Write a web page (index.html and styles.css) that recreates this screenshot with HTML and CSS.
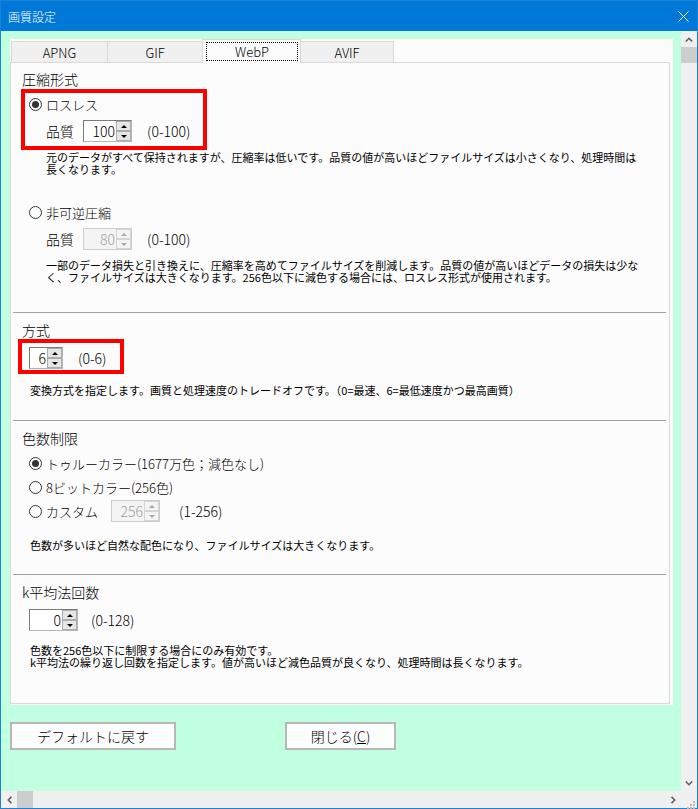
FILE: index.html
```html
<!DOCTYPE html>
<html lang="ja">
<head>
    <meta charset="UTF-8">
    <title>画質設定</title>
    <link rel="stylesheet" href="styles.css">
</head>
<body>
<div class="window">
    <!-- Title bar -->
    <div class="titlebar">
        <span class="title">画質設定</span>
        <svg class="close" width="11" height="11" viewBox="0 0 11 11">
            <path d="M0.5 0.5 L10.5 10.5 M10.5 0.5 L0.5 10.5" stroke="#fff" stroke-width="1" fill="none"/>
        </svg>
    </div>

    <div class="client">
        <div class="main">
            <div class="sheet">
                <!-- Tabs -->
                <div class="tabs">
                    <div class="tab tab-apng">APNG</div>
                    <div class="tab tab-gif">GIF</div>
                    <div class="tab tab-webp active"><span class="focus">WebP</span></div>
                    <div class="tab tab-avif">AVIF</div>
                </div>

                <div class="page">
                    <!-- 圧縮形式 -->
                    <div class="group group-first">
                        <div class="heading">圧縮形式</div>
                        <div class="option opt-top"><span class="radio on"></span>ロスレス</div>
                        <div class="sub sub-indent">
                            <span class="label">品質</span>
                            <div class="spin spin-wide">
                                <span class="spin-val">100</span>
                                <span class="spin-btns"><span class="spin-btn up"></span><span class="spin-btn down"></span></span>
                            </div>
                            <span class="range">(0-100)</span>
                        </div>
                        <p class="desc desc-indent">元のデータがすべて保持されますが、圧縮率は低いです。品質の値が高いほどファイルサイズは小さくなり、処理時間は<br>長くなります。</p>

                        <div class="option opt-lossy"><span class="radio"></span>非可逆圧縮</div>
                        <div class="sub sub-indent">
                            <span class="label">品質</span>
                            <div class="spin spin-wide off">
                                <span class="spin-val">80</span>
                                <span class="spin-btns"><span class="spin-btn up"></span><span class="spin-btn down"></span></span>
                            </div>
                            <span class="range">(0-100)</span>
                        </div>
                        <p class="desc desc-indent">一部のデータ損失と引き換えに、圧縮率を高めてファイルサイズを削減します。品質の値が高いほどデータの損失は少な<br>く、ファイルサイズは大きくなります。256色以下に減色する場合には、ロスレス形式が使用されます。</p>
                    </div>

                    <!-- 方式 -->
                    <div class="group group-method">
                        <div class="heading">方式</div>
                        <div class="sub sub-row">
                            <div class="spin spin-small">
                                <span class="spin-val">6</span>
                                <span class="spin-btns"><span class="spin-btn up"></span><span class="spin-btn down"></span></span>
                            </div>
                            <span class="range">(0-6)</span>
                        </div>
                        <p class="desc desc-method">変換方式を指定します。画質と処理速度のトレードオフです。（0=最速、6=最低速度かつ最高画質）</p>
                    </div>

                    <!-- 色数制限 -->
                    <div class="group group-colors">
                        <div class="heading">色数制限</div>
                        <div class="option opt-top"><span class="radio on"></span>トゥルーカラー(1677万色；減色なし)</div>
                        <div class="option opt-next"><span class="radio"></span>8ビットカラー(256色)</div>
                        <div class="option opt-next">
                            <span class="radio"></span>カスタム
                            <div class="spin spin-wide off spin-custom">
                                <span class="spin-val">256</span>
                                <span class="spin-btns"><span class="spin-btn up"></span><span class="spin-btn down"></span></span>
                            </div>
                            <span class="range">(1-256)</span>
                        </div>
                        <p class="desc desc-colors">色数が多いほど自然な配色になり、ファイルサイズは大きくなります。</p>
                    </div>

                    <!-- k平均法回数 -->
                    <div class="group group-kmeans">
                        <div class="heading">k平均法回数</div>
                        <div class="sub sub-row">
                            <div class="spin spin-wide">
                                <span class="spin-val">0</span>
                                <span class="spin-btns"><span class="spin-btn up"></span><span class="spin-btn down"></span></span>
                            </div>
                            <span class="range range-k">(0-128)</span>
                        </div>
                        <p class="desc desc-kmeans">色数を256色以下に制限する場合にのみ有効です。<br>k平均法の繰り返し回数を指定します。値が高いほど減色品質が良くなり、処理時間は長くなります。</p>
                    </div>

                    <!-- annotation boxes -->
                    <div class="mark mark-quality"></div>
                    <div class="mark mark-method"></div>
                </div>
            </div>

            <div class="buttons">
                <button class="btn btn-default">デフォルトに戻す</button>
                <button class="btn btn-close">閉じる(<u>C</u>)</button>
            </div>
        </div>

        <!-- Vertical scrollbar -->
        <div class="vscroll">
            <div class="arrow">
                <svg width="8" height="5" viewBox="0 0 8 5"><polyline points="0.8,4.5 4,1.3 7.2,4.5" fill="none" stroke="#606060" stroke-width="1.6"/></svg>
            </div>
            <div class="vthumb"></div>
            <div class="track"></div>
            <div class="arrow">
                <svg width="8" height="5" viewBox="0 0 8 5"><polyline points="0.8,0.5 4,3.7 7.2,0.5" fill="none" stroke="#606060" stroke-width="1.6"/></svg>
            </div>
        </div>
    </div>

    <!-- Horizontal scrollbar -->
    <div class="hscroll">
        <div class="harrow">
            <svg width="5" height="8" viewBox="0 0 5 8"><polyline points="4.5,0.8 1.3,4 4.5,7.2" fill="none" stroke="#606060" stroke-width="1.6"/></svg>
        </div>
        <div class="hthumb"></div>
        <div class="track"></div>
        <div class="harrow">
            <svg width="5" height="8" viewBox="0 0 5 8"><polyline points="0.5,0.8 3.7,4 0.5,7.2" fill="none" stroke="#606060" stroke-width="1.6"/></svg>
        </div>
        <div class="corner">
            <svg width="16" height="17" viewBox="0 0 16 17">
                <rect x="12" y="8" width="2" height="2" fill="#bcbcbc"/>
                <rect x="9" y="11" width="2" height="2" fill="#bcbcbc"/>
                <rect x="12" y="11" width="2" height="2" fill="#bcbcbc"/>
                <rect x="6" y="14" width="2" height="2" fill="#bcbcbc"/>
                <rect x="9" y="14" width="2" height="2" fill="#bcbcbc"/>
                <rect x="12" y="14" width="2" height="2" fill="#bcbcbc"/>
            </svg>
        </div>
    </div>
</div>
</body>
</html>
```

FILE: styles.css
```css
/* Reset */
* {
    margin: 0;
    padding: 0;
    box-sizing: border-box;
}

body {
    font-family: "Noto Sans CJK JP", sans-serif;
    font-weight: 300;
    color: #000;
    background-color: #fff;
}

/* Window frame */
.window {
    width: 698px;
    height: 809px;
    border: 1px solid #1883d7;
    background-color: #c0ffe0; /* mint client area */
    display: flex;
    flex-direction: column;
}

.titlebar {
    height: 30px;
    flex-shrink: 0;
    background-color: #0078d7;
    color: #fff;
    font-size: 12px;
    display: flex;
    align-items: center;
    justify-content: space-between;
    padding: 0 8px 0 7px;
}

.client {
    height: 760px;
    display: flex;
}

.main {
    width: 680px;
    padding: 8px 0 0 9px;
}

/* White sheet holding the tab control */
.sheet {
    width: 663px;
    height: 666px;
    background-color: #fcfcfc;
}

.tabs {
    height: 23px;
    display: flex;
    align-items: flex-end;
    padding-left: 1px;
}

.tab {
    height: 21px;
    border: 1px solid #d9d9d9;
    border-bottom: none;
    background-color: #f0f0f0;
    font-size: 13px;
    display: flex;
    align-items: center;
    justify-content: center;
    margin-right: -1px;
}

.tab-apng { width: 97px; }
.tab-gif { width: 96px; }
.tab-avif { width: 94px; }

.tab.active {
    width: 99px;
    height: 24px;
    margin-bottom: -1px;
    background-color: #fcfcfc;
    position: relative;
    z-index: 1;
    padding: 2px 2px 2px 3px;
    align-items: stretch;
}

.focus {
    flex: 1;
    border: 1px dotted #000;
    display: flex;
    align-items: center;
    justify-content: center;
}

/* Tab page */
.page {
    width: 660px;
    height: 642px;
    border: 1px solid #d9d9d9;
    background-color: #fcfcfc;
    padding: 0 3px 0 2px;
    position: relative;
}

.group {
    border-top: 1px solid #a0a0a0;
    padding-top: 9px;
}

.group-first {
    border-top: none;
    padding-top: 8px;
    padding-bottom: 29px;
}

.group-method { padding-bottom: 24px; }
.group-colors { padding-bottom: 23px; }

.heading {
    font-size: 14px;
    line-height: 16px;
    padding-left: 9px;
}

/* Radio options */
.option {
    height: 22px;
    display: flex;
    align-items: center;
    gap: 4px;
    padding-left: 16px;
    font-size: 13px;
}

.opt-top { margin-top: 6px; }
.opt-lossy { margin-top: 26px; }
.opt-next { margin-top: 2px; }

.radio {
    width: 13px;
    height: 13px;
    border: 1px solid #333;
    border-radius: 50%;
    background-color: #fff;
    display: flex;
    align-items: center;
    justify-content: center;
    flex-shrink: 0;
}

.radio.on::after {
    content: "";
    width: 7px;
    height: 7px;
    border-radius: 50%;
    background-color: #333;
}

/* Rows with a spinner */
.sub {
    height: 22px;
    display: flex;
    align-items: center;
    font-size: 14px;
    margin-top: 5px;
}

.sub-indent { padding-left: 33px; }

.sub-row {
    padding-left: 16px;
    margin-top: 9px;
}

.label {
    margin-right: 9px;
}

.spin {
    height: 22px;
    display: flex;
    background-color: #fff;
    border: 1px solid #7a7a7a;
    border-right-color: #b5b5b5;
    border-bottom-color: #b5b5b5;
}

.spin-wide { width: 49px; }
.spin-small { width: 34px; }
.spin-custom { margin-left: 9px; }

.spin-val {
    flex: 1;
    text-align: right;
    font-size: 14px;
    line-height: 20px;
    padding-right: 1px;
}

.spin-btns {
    width: 15px;
    display: flex;
    flex-direction: column;
}

.spin-btn {
    flex: 1;
    border: 1px solid #acacac;
    background-color: #e6e6e6;
    display: flex;
    align-items: center;
    justify-content: center;
}

.spin-btn.up::after {
    content: "";
    border-left: 3px solid transparent;
    border-right: 3px solid transparent;
    border-bottom: 3px solid #000;
}

.spin-btn.down::after {
    content: "";
    border-left: 3px solid transparent;
    border-right: 3px solid transparent;
    border-top: 3px solid #000;
}

.spin.off {
    border-color: #cccccc;
    background-color: #f4f4f4;
}

.spin.off .spin-val { color: #a0a0a0; }

.spin.off .spin-btn {
    border-color: #d5d5d5;
    background-color: #f4f4f4;
}

.spin.off .spin-btn.up::after { border-bottom-color: #a8a8a8; }
.spin.off .spin-btn.down::after { border-top-color: #a8a8a8; }

.range {
    margin-left: 15px;
    font-size: 14px;
}

.range-k { margin-left: 13px; }

/* Descriptions */
.desc {
    font-size: 11px;
    font-weight: 400;
    line-height: 12px;
    padding-left: 17px;
    white-space: nowrap;
}

.desc-indent {
    padding-left: 33px;
    margin-top: 9px;
}

.desc-method { margin-top: 15px; }
.desc-colors { margin-top: 17px; }
.desc-kmeans { margin-top: 13px; }

/* Red annotation boxes drawn over the page */
.mark {
    position: absolute;
    border: 4px solid #ff0000;
}

.mark-quality {
    left: 10px;
    top: 26px;
    width: 186px;
    height: 61px;
}

.mark-method {
    left: 7px;
    top: 276px;
    width: 106px;
    height: 35px;
}

/* Buttons */
.buttons {
    display: flex;
    gap: 109px;
    margin-top: 17px;
}

.btn {
    height: 28px;
    border: 2px solid #b7b7b7;
    background-color: #fdfdfd;
    font-family: "Noto Sans CJK JP", sans-serif;
    font-weight: 300;
    font-size: 14px;
    color: #000;
}

.btn-default { width: 166px; }
.btn-close { width: 111px; }

/* Scrollbars */
.vscroll {
    width: 16px;
    background-color: #f0f0f0;
    display: flex;
    flex-direction: column;
}

.arrow {
    height: 16px;
    display: flex;
    align-items: center;
    justify-content: center;
}

.vthumb {
    height: 16px;
    background-color: #cdcdcd;
}

.track { flex: 1; }

.hscroll {
    height: 17px;
    background-color: #f0f0f0;
    display: flex;
}

.harrow {
    width: 16px;
    display: flex;
    align-items: center;
    justify-content: center;
}

.hthumb {
    width: 16px;
    background-color: #cdcdcd;
}

.corner {
    width: 16px;
}
```
